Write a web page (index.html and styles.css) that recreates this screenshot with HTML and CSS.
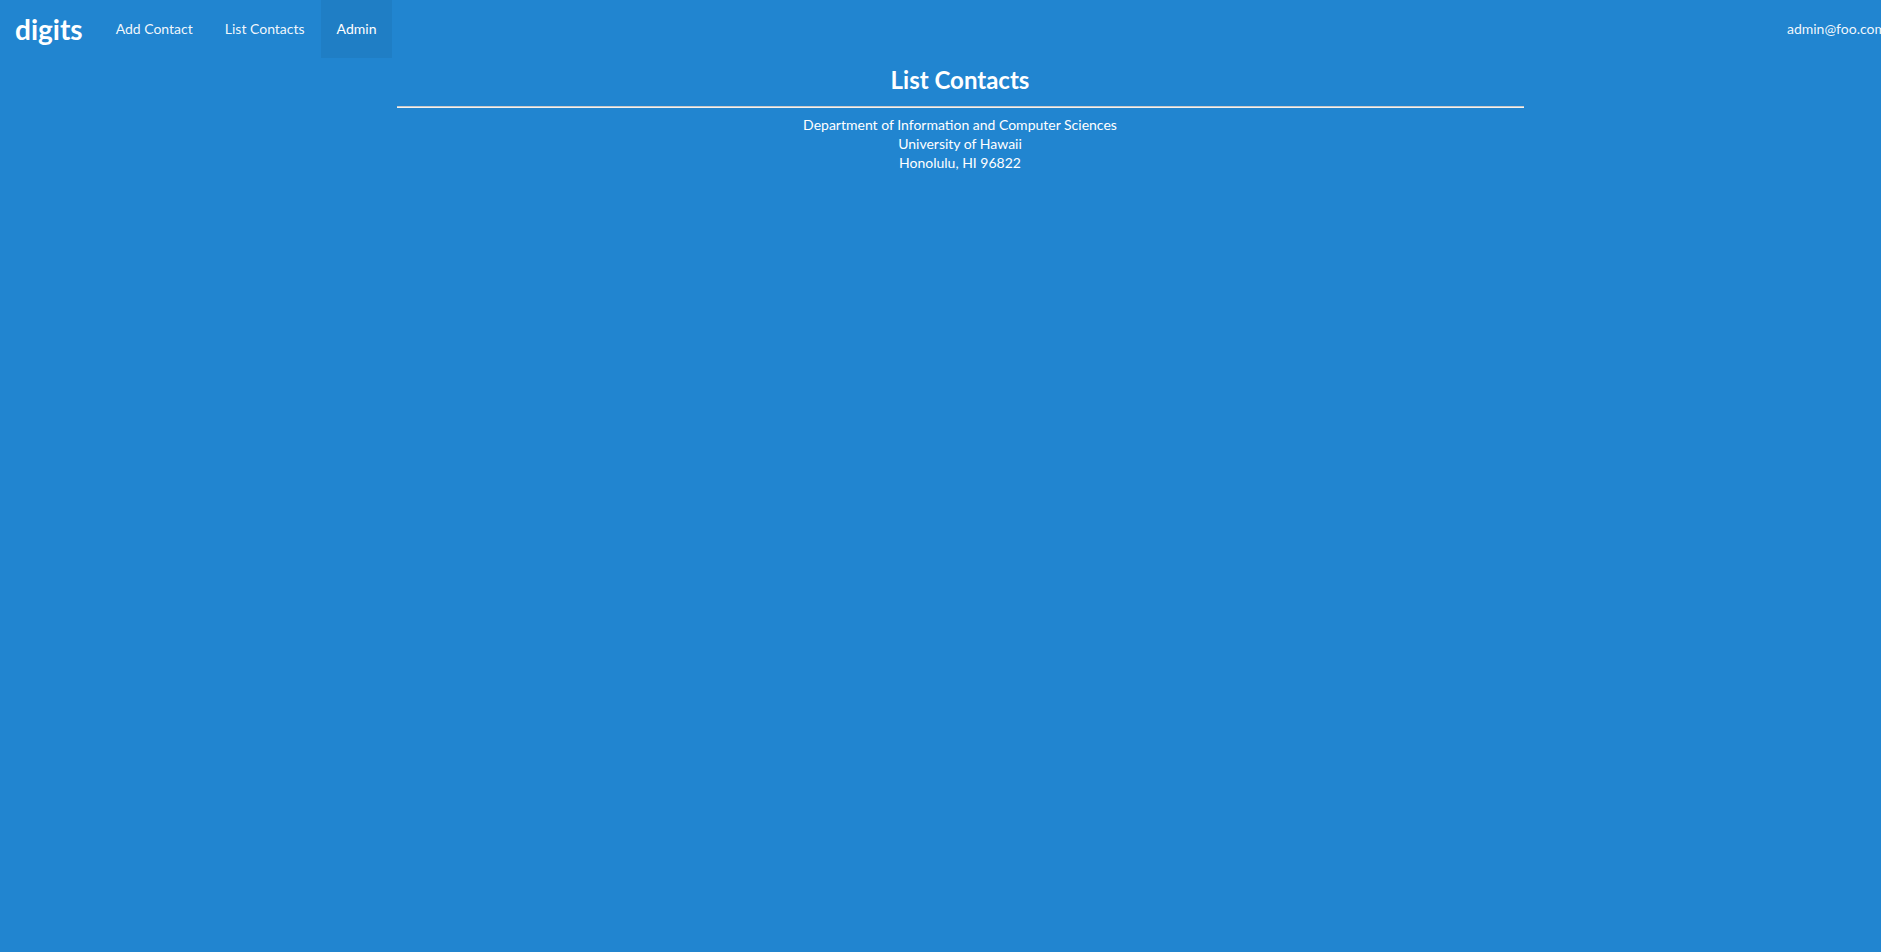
FILE: index.html
```html
<!DOCTYPE html>
<html>
<head>
<meta charset="utf-8">
<title>digits</title>
<link rel="stylesheet" href="styles.css">
</head>
<body>
<div class="page">
  <nav class="menu">
    <a class="brand">digits</a>
    <a class="item">Add Contact</a>
    <a class="item">List Contacts</a>
    <a class="item active">Admin</a>
    <div class="right">
      <a class="item">admin@foo.com</a>
    </div>
  </nav>
  <main class="container">
    <h2 class="title">List Contacts</h2>
    <hr class="divider">
    <footer class="footer">
      <div>Department of Information and Computer Sciences</div>
      <div>University of Hawaii</div>
      <div>Honolulu, HI 96822</div>
    </footer>
  </main>
</div>
</body>
</html>
```
FILE: styles.css
```css
html, body {
  margin: 0;
  padding: 0;
  overflow: hidden;
  background: #2185d0;
}
body {
  font-family: Lato, "Open Sans", sans-serif;
  font-size: 14px;
  color: #fff;
  min-height: 952px;
}
.page {
  width: 1920px;
}
.menu {
  display: flex;
  align-items: stretch;
  height: 58px;
}
.brand {
  display: flex;
  align-items: center;
  padding: 0 17px 0 15px;
  font-size: 28px;
  font-weight: 700;
  color: #fff;
}
.item {
  display: flex;
  align-items: center;
  padding: 0 16px 2px;
  color: rgba(255,255,255,.95);
  font-size: 14px;
}
.item.active {
  background: rgba(0,0,0,.05);
  color: #fff;
}
.right {
  margin-left: auto;
  display: flex;
}
.right .item {
  padding-right: 34px;
}
.container {
  width: 1127px;
  margin: 0 auto;
}
.title {
  margin: 5px 0 0;
  text-align: center;
  font-size: 24px;
  font-weight: 700;
  line-height: 34px;
}
.divider {
  margin: 9px 0 7px;
  border: 0;
  border-top: 1px solid #c8c8c8;
  border-bottom: 1px solid #f2f2f2;
  height: 0;
}
.footer {
  text-align: center;
  line-height: 19px;
}
```
